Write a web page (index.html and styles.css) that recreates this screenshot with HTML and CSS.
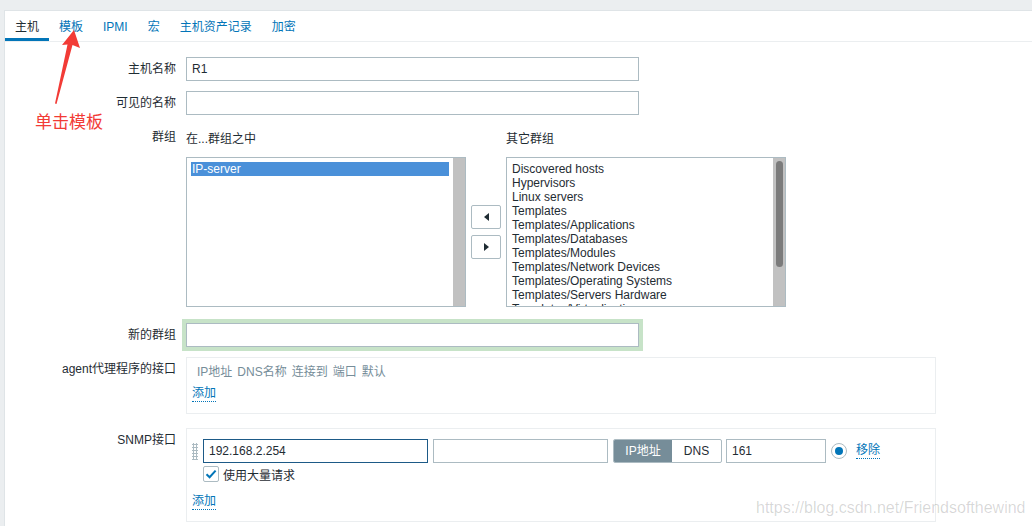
FILE: index.html
```html
<!DOCTYPE html>
<html lang="zh-CN">
<head>
    <meta charset="UTF-8">
    <title>主机</title>
    <link rel="stylesheet" href="styles.css">
</head>
<body>
    <div class="panel">
        <ul class="tabs">
            <li class="tab active">主机</li>
            <li class="tab">模板</li>
            <li class="tab">IPMI</li>
            <li class="tab">宏</li>
            <li class="tab">主机资产记录</li>
            <li class="tab">加密</li>
        </ul>

        <div class="form">
            <label class="form-label">主机名称</label>
            <div class="form-field"><input class="text-input wide" type="text" value="R1"></div>

            <label class="form-label">可见的名称</label>
            <div class="form-field"><input class="text-input wide" type="text" value=""></div>

            <label class="form-label">群组</label>
            <div class="form-field groups">
                <div class="group-col">
                    <div class="group-title">在...群组之中</div>
                    <div class="listbox">
                        <div class="list-items">
                            <div class="list-item selected">IP-server</div>
                        </div>
                        <div class="scroll"></div>
                    </div>
                </div>
                <div class="move-buttons">
                    <button class="move-btn"><span class="tri-left"></span></button>
                    <button class="move-btn"><span class="tri-right"></span></button>
                </div>
                <div class="group-col">
                    <div class="group-title">其它群组</div>
                    <div class="listbox">
                        <div class="list-items">
                            <div class="list-item">Discovered hosts</div>
                            <div class="list-item">Hypervisors</div>
                            <div class="list-item">Linux servers</div>
                            <div class="list-item">Templates</div>
                            <div class="list-item">Templates/Applications</div>
                            <div class="list-item">Templates/Databases</div>
                            <div class="list-item">Templates/Modules</div>
                            <div class="list-item">Templates/Network Devices</div>
                            <div class="list-item">Templates/Operating Systems</div>
                            <div class="list-item">Templates/Servers Hardware</div>
                            <div class="list-item">Templates/Virtualization</div>
                        </div>
                        <div class="scroll"><div class="thumb"></div></div>
                    </div>
                </div>
            </div>

            <label class="form-label">新的群组</label>
            <div class="form-field"><input class="text-input wide glow" type="text" value=""></div>

            <label class="form-label">agent代理程序的接口</label>
            <div class="form-field">
                <div class="iface-box agent">
                    <div class="iface-head">
                        <span>IP地址</span><span>DNS名称</span><span>连接到</span><span>端口</span><span>默认</span>
                    </div>
                    <a class="link add-link">添加</a>
                </div>
            </div>

            <label class="form-label snmp-label">SNMP接口</label>
            <div class="form-field snmp-field">
                <div class="iface-box snmp">
                    <div class="iface-row">
                        <div class="drag-handle"></div>
                        <input class="text-input ip focused" type="text" value="192.168.2.254">
                        <input class="text-input dns" type="text" value="">
                        <div class="segmented">
                            <span class="seg on">IP地址</span><span class="seg">DNS</span>
                        </div>
                        <input class="text-input port" type="text" value="161">
                        <span class="radio"><span class="radio-dot"></span></span>
                        <a class="link remove-link">移除</a>
                    </div>
                    <div class="bulk-row">
                        <span class="checkbox">
                            <svg width="12" height="10" viewBox="0 0 12 10"><path d="M1.5 5.2 L4.6 8.2 L10.6 1.6" fill="none" stroke="#0275b8" stroke-width="2"/></svg>
                        </span>
                        <span>使用大量请求</span>
                    </div>
                    <a class="link add-link snmp-add">添加</a>
                </div>
            </div>
        </div>
    </div>

    <!-- annotation overlay -->
    <svg class="arrow" width="100" height="120" viewBox="0 0 100 120">
        <polygon points="74,30 80,48 72.5,45 56.5,104 55,103.5 67.5,44.5 62,45" fill="#f23b36"/>
    </svg>
    <div class="note">单击模板</div>

    <div class="watermark">https://blog.csdn.net/Friendsofthewind</div>
</body>
</html>
```

FILE: styles.css
```css
body {
    margin: 0;
    background: #ebeef0;
    font-family: "Liberation Sans", Arial, "Noto Sans CJK SC", sans-serif;
    font-size: 12px;
    color: #1f2c33;
    height: 526px;
    overflow: hidden;
    position: relative;
}

.panel {
    box-sizing: border-box;
    margin: 10px 0 0 4px;
    background: #fff;
    border: 1px solid #dfe4e7;
    border-right: 0;
    border-bottom: 0;
    height: 516px;
}

/* tabs */
.tabs {
    list-style: none;
    margin: 0;
    padding: 0;
    display: flex;
    border-bottom: 1px solid #ebeef0;
}

.tab {
    padding: 5px 10px 0;
    line-height: 22px;
    border-bottom: 3px solid transparent;
    color: #0275b8;
}

.tab.active {
    color: #1f2c33;
    border-bottom-color: #0275b8;
}

/* form grid */
.form {
    display: grid;
    grid-template-columns: 171px auto;
    column-gap: 10px;
    row-gap: 10px;
    padding-top: 15px;
    justify-items: start;
}

.form-label {
    justify-self: end;
    line-height: 24px;
    white-space: nowrap;
}

.text-input {
    box-sizing: border-box;
    height: 24px;
    border: 1px solid #acbbc2;
    padding: 0 5px;
    font-family: inherit;
    font-size: 12px;
    color: #1f2c33;
    background: #fff;
    outline: none;
    margin: 0;
}

.wide {
    width: 453px;
}

.glow {
    box-shadow: 0 0 0 4px #c7e3c8;
}

/* groups */
.groups {
    display: flex;
    align-items: flex-end;
    margin-bottom: 6px;
}

.group-title {
    line-height: 24px;
    padding-top: 2px;
    margin-bottom: 6px;
}

.listbox {
    box-sizing: border-box;
    width: 280px;
    height: 150px;
    border: 1px solid #acbbc2;
    display: flex;
}

.list-items {
    flex: 1;
    padding: 4px 4px;
    overflow: hidden;
    line-height: 14px;
}

.list-item {
    padding-left: 1px;
    white-space: nowrap;
}

.list-item.selected {
    background: #4a90d9;
    color: #fff;
}

.scroll {
    width: 12px;
    background: #c1c1c1;
    display: flex;
    justify-content: center;
    padding-top: 3px;
}

.thumb {
    width: 7px;
    height: 106px;
    border-radius: 4px;
    background: #7b7b7b;
}

.move-buttons {
    height: 150px;
    width: 40px;
    display: flex;
    flex-direction: column;
    align-items: center;
    justify-content: center;
    gap: 6px;
}

.move-btn {
    width: 30px;
    height: 24px;
    padding: 0;
    border: 1px solid #acbbc2;
    border-radius: 2px;
    background: #fff;
    display: flex;
    align-items: center;
    justify-content: center;
}

.tri-left {
    border-top: 4px solid transparent;
    border-bottom: 4px solid transparent;
    border-right: 5px solid #1f2c33;
}

.tri-right {
    border-top: 4px solid transparent;
    border-bottom: 4px solid transparent;
    border-left: 5px solid #1f2c33;
}

/* interface boxes */
.iface-box {
    box-sizing: border-box;
    width: 750px;
    border: 1px solid #ebeef0;
    padding: 5px;
}

.iface-box.agent {
    height: 57px;
}

.iface-head {
    color: #768d99;
    line-height: 18px;
    padding-left: 5px;
}

.iface-head span {
    margin-right: 5px;
}

.link {
    color: #0275b8;
    border-bottom: 1px dotted #0275b8;
    cursor: pointer;
}

.add-link {
    display: inline-block;
    line-height: 15px;
    margin-top: 5px;
}

.snmp-label,
.snmp-field {
    margin-top: 4px;
}

.iface-box.snmp {
    height: 94px;
    padding-top: 10px;
}

.iface-row {
    display: flex;
    align-items: center;
}

.drag-handle {
    width: 6px;
    height: 17px;
    margin-right: 5px;
    background-image: radial-gradient(circle, #acbbc2 1px, transparent 1.2px);
    background-size: 3px 3px;
}

.ip {
    width: 225px;
}

.focused {
    border-color: #1d5a87;
}

.dns {
    width: 175px;
    margin-left: 5px;
}

.segmented {
    display: flex;
    margin-left: 5px;
    height: 24px;
    box-sizing: border-box;
    border: 1px solid #acbbc2;
    border-radius: 2px;
    overflow: hidden;
}

.seg {
    line-height: 22px;
    padding: 0 10px;
    width: 49px;
    box-sizing: border-box;
    text-align: center;
}

.seg.on {
    width: 58px;
    background: #768d99;
    color: #fff;
}

.port {
    width: 100px;
    margin-left: 4px;
}

.radio {
    box-sizing: border-box;
    width: 16px;
    height: 16px;
    margin-left: 5px;
    border: 1px solid #acbbc2;
    border-radius: 50%;
    display: flex;
    align-items: center;
    justify-content: center;
}

.radio-dot {
    width: 8px;
    height: 8px;
    border-radius: 50%;
    background: #0275b8;
}

.remove-link {
    margin-left: 9px;
    line-height: 15px;
}

.bulk-row {
    display: flex;
    align-items: center;
    margin: 3px 0 0 11px;
    height: 16px;
}

.checkbox {
    box-sizing: border-box;
    width: 16px;
    height: 16px;
    border: 1px solid #acbbc2;
    border-radius: 2px;
    display: flex;
    align-items: center;
    justify-content: center;
    margin-right: 4px;
}

.snmp-add {
    margin-top: 12px;
}

/* overlays */
.arrow {
    position: absolute;
    left: 0;
    top: 0;
}

.note {
    position: absolute;
    left: 35px;
    top: 109px;
    font-family: "Noto Sans CJK SC", sans-serif;
    font-size: 17px;
    line-height: 24px;
    color: #f23b36;
}

.watermark {
    position: absolute;
    left: 756px;
    top: 497px;
    font-family: "Liberation Sans", Arial, sans-serif;
    font-size: 16px;
    line-height: 22px;
    color: rgba(0, 0, 0, 0.16);
    white-space: nowrap;
}
```
